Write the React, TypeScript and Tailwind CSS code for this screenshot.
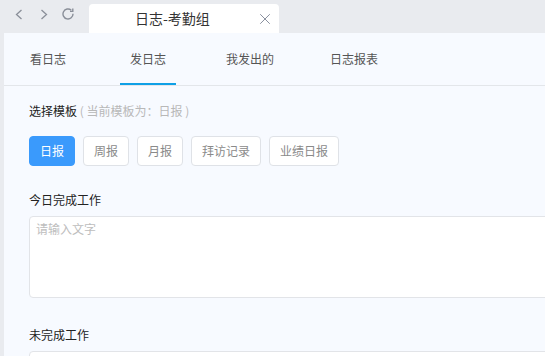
import { X } from 'lucide-react'

const tabs = [
  { label: '看日志', ml: 'ml-[16px]' },
  { label: '发日志', ml: 'ml-[44px]', active: true },
  { label: '我发出的', ml: 'ml-[40px]' },
  { label: '日志报表', ml: 'ml-[36px]' },
]

const templates = ['日报', '周报', '月报', '拜访记录', '业绩日报']

export default function App() {
  return (
    <div
      className="w-[545px] h-[356px] overflow-hidden bg-[#e9ebef] flex flex-col"
      style={{ fontFamily: '"Noto Sans CJK SC", "Noto Sans", sans-serif' }}
    >
      {/* 浏览器顶部 */}
      <div className="h-[33px] flex items-start shrink-0">
        <div className="flex items-center text-[#8a8f99] pl-[15px] pt-[8px]">
          <svg width="8" height="11" viewBox="0 0 8 11" fill="none" stroke="currentColor" strokeWidth="1.3">
            <polyline points="6.5,1 1.5,5.5 6.5,10" />
          </svg>
          <svg width="8" height="11" viewBox="0 0 8 11" fill="none" stroke="currentColor" strokeWidth="1.3" className="ml-[17px]">
            <polyline points="1.5,1 6.5,5.5 1.5,10" />
          </svg>
          <svg width="13" height="12" viewBox="0 0 13 12" fill="none" stroke="currentColor" strokeWidth="1.4" className="ml-[14px]">
            <path d="M11 5.8 A5 5 0 1 1 9.3 2.2" />
            <polyline points="10.8,0.6 10.8,3.4 8,3.4" />
          </svg>
        </div>
        <div className="ml-[14px] mt-[4px] w-[190px] h-[29px] bg-white rounded-t-[4px] flex items-center pl-[46px] pr-[5px]">
          <span className="text-[14px] text-[#333] flex-1">日志-考勤组</span>
          <X size={18} strokeWidth={1.2} className="text-[#7d8594]" />
        </div>
      </div>

      <div className="flex-1 ml-[4px] bg-[#f7faff] overflow-hidden">
        {/* 标签栏 */}
        <div className="h-[53px] border-b border-[#e3e6ea] flex">
          {tabs.map((t) => (
            <div
              key={t.label}
              className={`${t.ml} px-[10px] flex items-center relative text-[12px] text-[#555]`}
            >
              {t.label}
              {t.active && <div className="absolute left-0 right-0 bottom-0 h-[2px] bg-[#0fa0e6]" />}
            </div>
          ))}
        </div>

        <div className="pl-[25px]">
          <div className="pt-[15px] text-[12px] leading-[20px] text-[#222]">
            选择模板<span className="text-[#b8b8b8]"> ( 当前模板为：日报 )</span>
          </div>

          <div className="mt-[15px] flex gap-[8px]">
            {templates.map((t, i) => (
              <div
                key={t}
                className={`h-[30px] px-[10px] rounded-[4px] border flex items-center text-[12px] ${
                  i === 0 ? 'bg-[#3a9afc] border-[#3a9afc] text-white' : 'bg-white border-[#dfe2e7] text-[#8a8a8a]'
                }`}
              >
                {t}
              </div>
            ))}
          </div>

          <div className="mt-[24px] text-[12px] leading-[20px] text-[#222]">今日完成工作</div>
          <div className="mt-[6px] w-[720px] h-[82px] bg-white border border-[#e2e4e8] rounded-[4px] px-[6px] py-[3px] text-[12px] text-[#bdbdbd]">
            请输入文字
          </div>

          <div className="mt-[27px] text-[12px] leading-[20px] text-[#222]">未完成工作</div>
          <div className="mt-[6px] w-[720px] h-[82px] bg-white border border-[#e2e4e8] rounded-[4px]" />
        </div>
      </div>
    </div>
  )
}
